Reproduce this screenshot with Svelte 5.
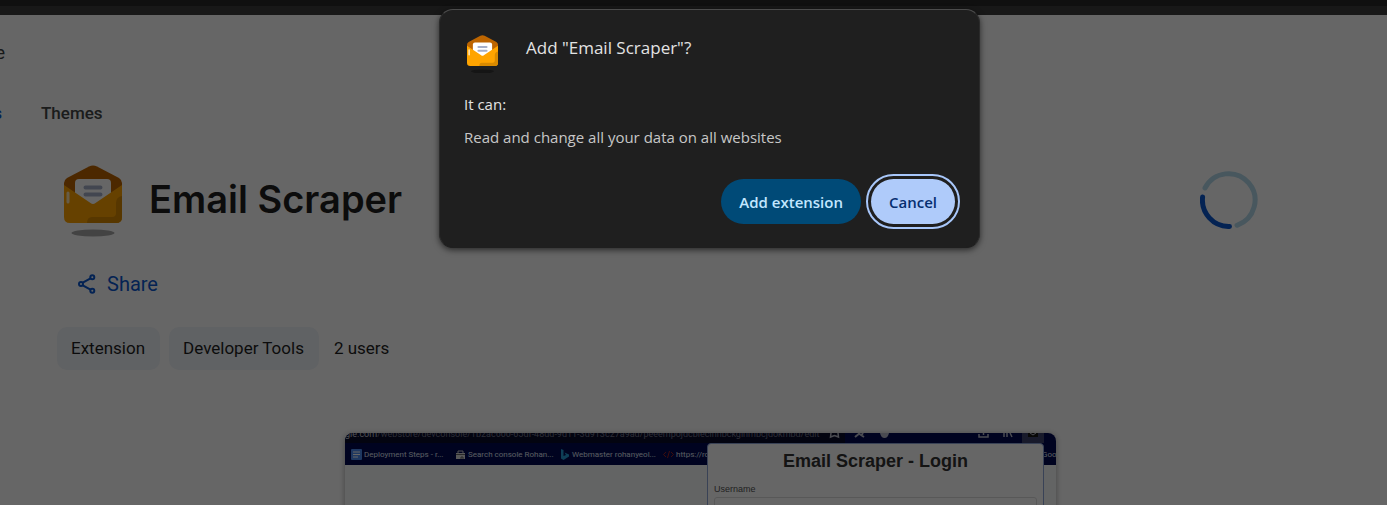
<script>
	const bookmarks = [
		{ label: 'Deployment Steps - r...', icon: 'doc' },
		{ label: 'Search console Rohan...', icon: 'console' },
		{ label: 'Webmaster rohanyeol...', icon: 'bing' },
		{ label: 'https://rc', icon: 'code' }
	];

	const categories = ['Extension', 'Developer Tools'];

	let isDialogOpen = $state(true);

	function closeDialog() {
		isDialogOpen = false;
	}
</script>

{#snippet envelope()}
	<svg viewBox="0 0 58 72" aria-hidden="true">
		<path d="M0 18Q0 15 3 13L25 1.500Q29 -.5 33 1.500L55 13Q58 15 58 18V36H0Z" fill="#bd6500" />
		<path d="M11 18Q11 14 15 14H43Q47 14 47 18V40H11Z" fill="#fff" />
		<path d="M21.500 22.500H36.500M21.500 29.500H36.500" stroke="#a5afc9" stroke-width="4" stroke-linecap="round" />
		<path d="M0 20L26.500 38Q29 40 31.500 38L58 20V52Q58 58 52 58H6Q0 58 0 52Z" fill="#ffa400" />
		<path d="M58 31Q52 32 52 38V48Q52 52 48 52H28Q23 52 23 58H52Q58 58 58 52Z" fill="#d98a00" />
		<path d="M4 28V37" stroke="#ffe5b5" stroke-width="3" stroke-linecap="round" />
		<ellipse class="shade" cx="29" cy="68" rx="21.500" ry="3.500" />
	</svg>
{/snippet}

<div class="page">
	<div class="browser-edge"></div>

	<header class="store-header">
		<span class="store-name">e</span>
	</header>

	<nav class="tabs">
		<a href="#extensions" class="tab active">s</a>
		<a href="#themes" class="tab">Themes</a>
	</nav>

	<main>
		<section class="summary">
			<div class="title-row">
				<div class="item-logo">{@render envelope()}</div>
				<h1>Email Scraper</h1>
				<svg class="spinner" viewBox="0 0 58 58" role="img" aria-label="Loading">
					<path d="M5 17A26.500 26.500 0 1 1 37 54.300" stroke="#b4d9ea" />
					<path d="M2.600 26A26.500 26.500 0 0 0 29.500 55.500" stroke="#0b57d0" />
				</svg>
			</div>

			<button class="share">
				<svg viewBox="0 0 18 20" aria-hidden="true">
					<path d="M4.800 8.700L12.500 4.300M4.800 11.300L12.500 15.700" />
					<circle cx="3" cy="10" r="2" />
					<circle cx="14.300" cy="3.300" r="2" />
					<circle cx="14.300" cy="16.700" r="2" />
				</svg>
				Share
			</button>

			<div class="meta">
				{#each categories as category}
					<a href="#category" class="chip">{category}</a>
				{/each}
				<span class="users">2 users</span>
			</div>
		</section>

		<section class="preview-area">
			<div class="preview">
				<div class="address-row">
					<div class="address"><span>gle.com</span>/webstore/devconsole/1b2ac600-65df-48dd-9d11-3d913c27a9ad/peeempojdcbleclnnbckginmbcjdokmbd/edit</div>
					<svg class="toolbar-icons" viewBox="0 0 228 10" aria-hidden="true">
						<rect width="17" height="10" fill="#080a28" />
						<rect x="194" width="22" height="10" fill="#3d426b" />
						<g fill="none" stroke="#b9bccb" stroke-width="1.500">
							<path d="M3 0L2.500 4L6.500 2.500L10.500 4L10 0" />
							<path d="M27 4L32 0M30 0L36 4M33 3L35 0" stroke-width="2" />
							<path d="M151 1V4H160V1M155.500 0V2" />
							<path d="M176 0V4M179 0V4M182 0L184 4" />
						</g>
						<path d="M52 0H61Q60 5 56.500 5Q53 5 52 0" fill="#b9bccb" />
						<path d="M200 0H210V4H200Z" fill="#151515" />
						<path d="M202 0L205 2L208 0" stroke="#b9bccb" fill="none" />
					</svg>
				</div>

				<div class="bookmarks">
					{#each bookmarks as bookmark}
						<span class="bookmark">
							<svg viewBox="0 0 11 11" aria-hidden="true">
								{#if bookmark.icon === 'doc'}
									<rect width="11" height="11" rx="1" fill="#4d8af0" />
									<path d="M2 3H9M2 5.500H9M2 8H7" stroke="#fff" />
								{:else if bookmark.icon === 'console'}
									<path d="M3 4V2H8V4" fill="none" stroke="#ccc" />
									<rect x="1" y="4" width="9" height="6" fill="#ddd" />
									<path d="M1 5.500H10M6 10V8H8V10" stroke="#666" fill="none" />
								{:else if bookmark.icon === 'bing'}
									<path d="M2 0L4.500 1V7L7 6L5.500 3.500L10 5.500V7.500L4.500 11L2 9.500Z" fill="#249bd7" />
								{:else}
									<path d="M3 3L.5 5.500L3 8M8 3L10.500 5.500L8 8M6.500 2L4.500 9" stroke="#9c2020" fill="none" />
								{/if}
							</svg>
							{bookmark.label}
						</span>
					{/each}
					<span class="last-bookmark">Goo</span>
				</div>

				<div class="login">
					<h2>Email Scraper - Login</h2>
					<label for="username">Username</label>
					<input id="username" type="text" />
				</div>
			</div>
		</section>
	</main>
</div>

{#if isDialogOpen}
	<div class="scrim">
		<div class="dialog" role="dialog" aria-modal="true" aria-labelledby="dialog-title">
			<div class="dialog-head">
				<div class="dialog-logo">{@render envelope()}</div>
				<h2 id="dialog-title">Add "Email Scraper"?</h2>
			</div>
			<p class="lead">It can:</p>
			<p class="permission">Read and change all your data on all websites</p>
			<div class="actions">
				<button class="btn btn-add" onclick={closeDialog}>Add extension</button>
				<button class="btn btn-cancel" onclick={closeDialog}>Cancel</button>
			</div>
		</div>
	</div>
{/if}

<style>
	:global(body) {
		margin: 0;
		background: #fff;
	}

	.page {
		height: 100vh;
		overflow: hidden;
		font-family: Roboto, sans-serif;
		color: #1f1f1f;
	}

	svg {
		display: block;
	}

	.browser-edge {
		height: 9px;
		border-top: 6px solid #282828;
		background: #3e3e3e;
	}

	.store-header {
		display: flex;
		align-items: center;
		height: 75px;
	}

	.store-name {
		width: 5px;
		display: flex;
		justify-content: flex-end;
		font-size: 18px;
		color: #3c4043;
	}

	.tabs {
		display: flex;
		align-items: center;
		gap: 39px;
		height: 45px;
	}

	.tab {
		color: #444746;
		font-size: 17px;
		font-weight: 500;
		text-decoration: none;
	}

	.tab.active {
		display: flex;
		justify-content: flex-end;
		width: 2px;
		color: #0b57d0;
	}

	.summary {
		padding: 30px 129px 0 57px;
	}

	.title-row {
		display: flex;
		align-items: center;
		height: 71px;
		padding-left: 7px;
	}

	.item-logo {
		width: 58px;
	}

	.shade {
		fill: #a8a8a8;
	}

	h1 {
		flex: 1;
		margin: 0 0 4px 27px;
		font-family: Inter, sans-serif;
		font-size: 38px;
		line-height: 48px;
		font-weight: 600;
	}

	.spinner {
		width: 58px;
		height: 58px;
		margin-bottom: 2px;
		fill: none;
		stroke-width: 5px;
		stroke-linecap: round;
	}

	.share {
		display: flex;
		align-items: center;
		gap: 11px;
		height: 48px;
		margin: 24px 0 0 21px;
		padding: 0;
		border: 0;
		background: none;
		color: #0b57d0;
		font: 20px/24px Roboto, sans-serif;
	}

	.share svg {
		width: 18px;
		height: 20px;
		fill: none;
		stroke: #0b57d0;
		stroke-width: 2px;
	}

	.meta {
		display: flex;
		align-items: center;
		gap: 9px;
		margin-top: 19px;
		font-size: 17px;
		line-height: 43px;
	}

	.chip {
		padding: 0 15px 0 14px;
		border-radius: 10px;
		background: #f0f4f9;
		color: #1f1f1f;
		text-decoration: none;
	}

	.users {
		margin-left: 6px;
	}

	.preview-area {
		padding: 63px 0 0 14px;
	}

	.preview {
		position: relative;
		max-width: 711px;
		height: 400px;
		margin: 0 auto;
		overflow: hidden;
		border-radius: 8px;
		background: #f8fbfb;
		font-size: 9px;
		box-shadow: 0 1px 6px #0005;
	}

	.address-row {
		display: flex;
		height: 10px;
		background: #000852;
	}

	.address {
		flex: 1;
		overflow: hidden;
		background: #080a28;
		color: #71748a;
		line-height: 2px;
		white-space: nowrap;
	}

	.address span {
		color: #c5c8d8;
	}

	.toolbar-icons {
		width: 228px;
		height: 10px;
	}

	.bookmarks {
		display: flex;
		align-items: center;
		height: 22px;
		padding-left: 6px;
		background: #000852;
		color: #dfe1ee;
		font-size: 8px;
		white-space: nowrap;
	}

	.bookmark {
		display: flex;
		flex-shrink: 0;
		align-items: center;
		gap: 2px;
		width: 104px;
	}

	.bookmark svg {
		flex-shrink: 0;
		width: 11px;
		height: 11px;
	}

	.last-bookmark {
		margin-left: auto;
		width: 14px;
		overflow: hidden;
	}

	.login {
		position: absolute;
		top: 10px;
		right: 12px;
		box-sizing: border-box;
		width: 337px;
		height: 390px;
		padding: 4px 6px;
		border: 1px solid #8ea6d8;
		border-radius: 4px;
		background: #fff;
		color: #333;
		font-family: "Liberation Sans", Arial, sans-serif;
	}

	.login h2 {
		margin: 0 0 10px;
		font-size: 18px;
		line-height: 26px;
		text-align: center;
	}

	.login label {
		display: block;
		color: #555;
		font-size: 9px;
		line-height: 10px;
	}

	.login input {
		box-sizing: border-box;
		width: 100%;
		height: 24px;
		margin-top: 3px;
		border: 1px solid #ddd;
		border-radius: 3px;
	}

	.scrim {
		position: absolute;
		inset: 0;
		display: flex;
		justify-content: center;
		align-items: flex-start;
		padding: 9px 0 0 32px;
		background: rgba(0, 0, 0, 0.6);
		font-family: "Open Sans", sans-serif;
	}

	.dialog {
		box-sizing: border-box;
		width: 541px;
		padding: 25px 24px 23px;
		border: 1px solid #1f1f1f;
		border-color: #4c4c4c #2b2b2b #1f1f1f;
		border-radius: 14px;
		background: #1f1f1f;
		color: #e3e3e3;
		box-shadow: 0 2px 6px rgba(0, 0, 0, 0.6);
	}

	.dialog-head {
		display: flex;
		gap: 28px;
		padding-left: 3px;
	}

	.dialog-logo {
		width: 31px;
	}

	.dialog-logo .shade {
		fill: #151515;
	}

	.dialog h2 {
		margin: 0;
		font-size: 17px;
		line-height: 26px;
		font-weight: 400;
	}

	.dialog p {
		margin: 0;
		font-size: 15px;
		line-height: 24px;
	}

	.dialog .lead {
		margin-top: 19px;
	}

	.dialog .permission {
		margin-top: 9px;
		color: #c7c7c7;
	}

	.actions {
		display: flex;
		justify-content: flex-end;
		gap: 10px;
		margin-top: 30px;
	}

	.btn {
		height: 45px;
		padding: 0 18px;
		border: 0;
		border-radius: 23px;
		font: 600 15px/24px "Open Sans", sans-serif;
	}

	.btn-add {
		background: #004a77;
		color: #c2e7ff;
	}

	.btn-cancel {
		background: #afcbfa;
		color: #062e6f;
		outline: 2px solid #a8c7fa;
		outline-offset: 3px;
	}
</style>
